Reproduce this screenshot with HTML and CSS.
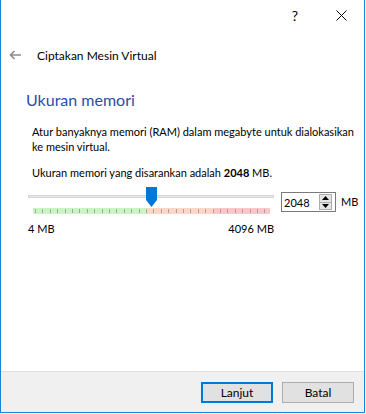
FILE: index.html
```html
<!DOCTYPE html>
<html lang="id">
<head>
  <meta charset="UTF-8">
  <title>Ciptakan Mesin Virtual</title>
  <link rel="stylesheet" href="styles.css">
</head>
<body>

  <div class="window">
    <div class="titlebar">
      <span class="cap-btn">?</span>
      <span class="cap-btn">
        <svg width="11" height="11" viewBox="0 0 11 11"><path d="M0.5 0.5 L10.5 10.5 M10.5 0.5 L0.5 10.5" stroke="#000" stroke-width="1" fill="none"/></svg>
      </span>
    </div>

    <div class="wizard-header">
      <svg class="back" width="13" height="10" viewBox="0 0 13 10"><path d="M12 5 H1.5 M5.5 1 L1.5 5 L5.5 9" stroke="#8c8c8c" stroke-width="1.6" fill="none"/></svg>
      <span>Ciptakan Mesin Virtual</span>
    </div>

    <div class="page">
      <h1>Ukuran memori</h1>
      <div class="page-body">
        <p>Atur banyaknya memori (RAM) dalam megabyte untuk dialokasikan<br>ke mesin virtual.</p>
        <p class="hint">Ukuran memori yang disarankan adalah <b>2048</b> MB.</p>

        <div class="memory-row">
          <div class="slider">
            <div class="track-area">
              <div class="track"></div>
              <div class="thumb"></div>
            </div>
            <div class="ticks">
              <div class="zone green"></div>
              <div class="zone orange"></div>
              <div class="zone red"></div>
            </div>
            <div class="limits"><span>4 MB</span><span>4096 MB</span></div>
          </div>

          <div class="spinbox">
            <span class="value">2048</span>
            <div class="arrows">
              <div class="arrow-btn"><svg width="7" height="4" viewBox="0 0 7 4"><path d="M0 4 L3.5 0 L7 4 Z" fill="#000"/></svg></div>
              <div class="arrow-btn"><svg width="7" height="4" viewBox="0 0 7 4"><path d="M0 0 L3.5 4 L7 0 Z" fill="#000"/></svg></div>
            </div>
          </div>
          <span class="unit">MB</span>
        </div>
      </div>
    </div>

    <div class="footer">
      <button class="btn default">Lanjut</button>
      <button class="btn">Batal</button>
    </div>
  </div>

</body>
</html>
```

FILE: styles.css
```css
body {
  margin: 0;
  padding: 0;
  background-color: #ffffff;
  font-family: Lato, "Noto Sans", sans-serif;
  font-size: 11px;
  color: #000;
}
.window {
  width: 365px;
  height: 413px;
  box-sizing: border-box;
  border: 1px solid #1883d7;
  border-top: none;
  background-color: #fff;
  display: flex;
  flex-direction: column;
}
.titlebar {
  height: 30px;
  display: flex;
  justify-content: flex-end;
}
.cap-btn {
  width: 46px;
  display: flex;
  align-items: center;
  justify-content: center;
  font-size: 14px;
}
.wizard-header {
  height: 50px;
  display: flex;
  align-items: center;
  padding-left: 8px;
  font-size: 12px;
}
.wizard-header .back {
  margin-right: 15px;
}
.page {
  padding: 10px 0 0 25px;
  flex: 1;
}
.page h1 {
  margin: 0;
  font-size: 16px;
  line-height: 20px;
  font-weight: normal;
  color: #2c4ca8;
}
.page-body {
  padding-left: 2px;
}
.page-body p {
  margin: 14px 0 0 0;
  padding-left: 4px;
  line-height: 15px;
  white-space: nowrap;
}
.page-body p.hint {
  margin-top: 11px;
}
.memory-row {
  display: flex;
  align-items: flex-start;
  margin-top: 7px;
}
.slider {
  width: 246px;
}
.track-area {
  position: relative;
  height: 20px;
}
.track {
  position: relative;
  top: 8px;
  height: 3px;
  box-sizing: border-box;
  background-color: #e7e7e7;
  border: 1px solid #d6d6d6;
}
.thumb {
  position: absolute;
  left: 118px;
  top: 0;
  width: 11px;
  height: 20px;
  background-color: #0078d7;
  clip-path: polygon(0 0, 100% 0, 100% 65%, 50% 100%, 0 65%);
}
.ticks {
  margin: 1px 4px 0 5px;
  height: 6px;
  display: flex;
  position: relative;
}
.ticks::after {
  content: "";
  position: absolute;
  left: 2px;
  right: 0;
  top: 1px;
  height: 4px;
  background: repeating-linear-gradient(to right, #a4a4a4 0 1px, transparent 1px 7.4px);
}
.zone.green {
  width: 113px;
  background-color: #c9f5c4;
}
.zone.orange {
  width: 68px;
  background-color: #fdd7c6;
}
.zone.red {
  flex: 1;
  background-color: #fcc7c9;
}
.limits {
  display: flex;
  justify-content: space-between;
  margin-top: 7px;
  line-height: 15px;
}
.spinbox {
  margin: 5px 0 0 7px;
  width: 55px;
  height: 20px;
  box-sizing: border-box;
  border: 1px solid #7a7a7a;
  display: flex;
  align-items: center;
  justify-content: space-between;
  padding: 0 3px 0 2px;
}
.arrows {
  width: 13px;
  height: 16px;
  display: flex;
  flex-direction: column;
  border: 1px solid #adadad;
  box-sizing: border-box;
  background-color: #e5e5e5;
}
.arrow-btn {
  flex: 1;
  display: flex;
  align-items: center;
  justify-content: center;
}
.arrow-btn + .arrow-btn {
  border-top: 1px solid #adadad;
}
.unit {
  margin: 8px 0 0 5px;
}
.footer {
  height: 41px;
  box-sizing: border-box;
  border-top: 1px solid #dfdfdf;
  background-color: #f0f0f0;
  display: flex;
  align-items: center;
  justify-content: flex-end;
  gap: 9px;
  padding-right: 10px;
}
.btn {
  width: 72px;
  height: 21px;
  font-family: Lato, "Noto Sans", sans-serif;
  font-size: 12px;
  background-color: #e1e1e1;
  border: 1px solid #adadad;
  padding: 0;
  color: #000;
}
.btn.default {
  border: 2px solid #0078d7;
}
```
